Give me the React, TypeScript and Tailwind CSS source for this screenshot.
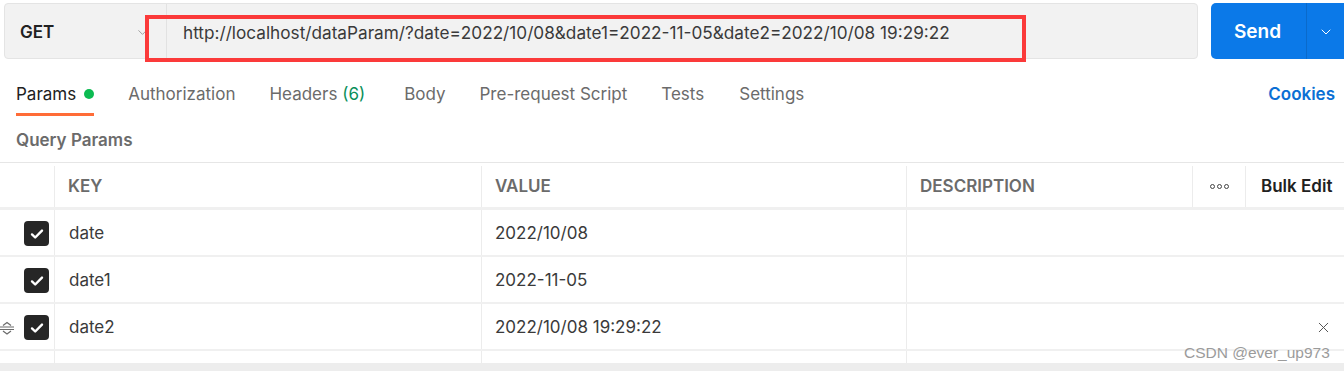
import { ChevronDown, X } from "lucide-react";

type Row = { key: string; value: string; handle?: boolean; remove?: boolean };

const rows: Row[] = [
  { key: "date", value: "2022/10/08" },
  { key: "date1", value: "2022-11-05" },
  { key: "date2", value: "2022/10/08 19:29:22", handle: true, remove: true },
];

function Check() {
  return (
    <span className="flex h-[25px] w-[25px] items-center justify-center rounded-[4px] bg-[#262626]">
      <svg width="16" height="16" viewBox="0 0 16 16" fill="none">
        <path d="M3 8.4l3.2 3.1L13 4.6" stroke="#fff" strokeWidth="2.4" strokeLinecap="round" strokeLinejoin="round" />
      </svg>
    </span>
  );
}

function Handle() {
  return (
    <svg width="14" height="14" viewBox="0 0 14 14" fill="none" className="text-[#6b6b6b]">
      <path d="M3 4.5L7 1.5L11 4.5" stroke="currentColor" strokeWidth="1.2" />
      <path d="M0 6h14M0 8.5h14" stroke="currentColor" strokeWidth="1.2" />
      <path d="M3 10L7 13L11 10" stroke="currentColor" strokeWidth="1.2" />
    </svg>
  );
}

export default function App() {
  return (
    <div className="relative h-[371px] w-[1344px] overflow-hidden bg-white font-['Inter',sans-serif] text-[17px] text-[#212121]">
      {/* request bar */}
      <div className="flex h-[59px] items-end pl-[4px]">
        <div className="flex h-[56px] w-[1194px] shrink-0 rounded-[4px] border border-[#e4e4e4] bg-[#f2f2f2]">
          <div className="flex w-[162px] items-center justify-between border-r border-[#e2e2e2] pl-[15px] pr-[16px] pt-[3px]">
            <span className="text-[17px] font-semibold text-[#212121]">GET</span>
            <ChevronDown size={15} strokeWidth={1.5} className="text-[#9a9a9a]" />
          </div>
          <div className="flex items-center pl-[16px] pt-[3px] text-[17.2px] text-[#3a3a3a]">
            http://localhost/dataParam/?date=2022/10/08&amp;date1=2022-11-05&amp;date2=2022/10/08 19:29:22
          </div>
        </div>
        <div className="ml-[13px] flex h-[56px] w-[140px] shrink-0 rounded-l-[5px] bg-[#0b79e8] text-white">
          <div className="flex w-[96px] items-center justify-center border-r border-[#0a6acb] pr-[2px] pt-[2px] text-[19px] font-semibold">
            Send
          </div>
          <div className="flex w-[36px] items-center justify-center pl-[2px] pt-[2px]">
            <ChevronDown size={16} strokeWidth={1.5} />
          </div>
        </div>
      </div>

      {/* tabs */}
      <div className="flex h-[57px] items-end justify-between pl-[16px] pr-[9px]">
        <div className="flex items-end text-[17px] text-[#6b6b6b]">
          <div className="flex h-[32px] flex-col justify-between">
            <div className="flex items-center gap-[8px] leading-[20px] text-[#212121]">
              Params
              <span className="h-[10px] w-[10px] rounded-full bg-[#0cbb52]" />
            </div>
            <div className="h-[3px] w-[78px] bg-[#ff6c37]" />
          </div>
          <div className="ml-[34px] h-[32px] leading-[20px]">Authorization</div>
          <div className="ml-[34px] h-[32px] leading-[20px]">
            Headers <span className="text-[#0a8f5a]">(6)</span>
          </div>
          <div className="ml-[39px] h-[32px] leading-[20px]">Body</div>
          <div className="ml-[34px] h-[32px] leading-[20px]">Pre-request Script</div>
          <div className="ml-[34px] h-[32px] leading-[20px]">Tests</div>
          <div className="ml-[35px] h-[32px] leading-[20px]">Settings</div>
        </div>
        <div className="h-[32px] text-[17px] font-semibold leading-[20px] text-[#0b6fd4]">Cookies</div>
      </div>

      {/* query params label */}
      <div className="flex h-[46px] items-center pl-[16px] pt-[4px] text-[17px] font-semibold text-[#6b6b6b]">
        Query Params
      </div>

      {/* table */}
      <div className="border-t border-[#e6e6e6]">
        <div className="flex h-[47px] border-b-[3px] border-[#f0f0f0] pt-[3px] text-[17px] font-semibold text-[#6b6b6b]">
          <div className="w-[55px] border-r border-[#ececec]" />
          <div className="flex w-[427px] items-center border-r border-[#ececec] pl-[13px]">KEY</div>
          <div className="flex w-[425px] items-center border-r border-[#ececec] pl-[13px]">VALUE</div>
          <div className="flex w-[286px] items-center border-r border-[#ececec] pl-[13px]">DESCRIPTION</div>
          <div className="flex w-[53px] items-center justify-center border-r border-[#ececec]">
            <span className="flex gap-[2px]">
              <span className="h-[5px] w-[5px] rounded-full border-[1.5px] border-[#444]" />
              <span className="h-[5px] w-[5px] rounded-full border-[1.5px] border-[#444]" />
              <span className="h-[5px] w-[5px] rounded-full border-[1.5px] border-[#444]" />
            </span>
          </div>
          <div className="flex flex-1 items-center pl-[15px] text-[#212121]">Bulk Edit</div>
        </div>
        {rows.map((r) => (
          <div key={r.key} className="flex h-[47px] border-b-2 border-[#f0f0f0] text-[17px] text-[#3a3a3a]">
            <div className="flex w-[55px] items-center border-r border-[#ececec] pt-[2px]">
              <div className="flex w-[24px] justify-start">{r.handle && <Handle />}</div>
              <Check />
            </div>
            <div className="flex w-[427px] items-center border-r border-[#ececec] pl-[14px] pt-[2px]">{r.key}</div>
            <div className="flex w-[425px] items-center border-r border-[#ececec] pl-[13px] pt-[2px]">{r.value}</div>
            <div className="flex flex-1 items-center justify-end pr-[12px] pt-[2px]">
              {r.remove && <X size={17} strokeWidth={1.4} className="text-[#555]" />}
            </div>
          </div>
        ))}
        <div className="flex h-[12px]">
          <div className="w-[55px] border-r border-[#ececec]" />
          <div className="w-[427px] border-r border-[#ececec]" />
          <div className="w-[425px] border-r border-[#ececec]" />
        </div>
        <div className="h-[10px] bg-[#ededed]" />
      </div>

      {/* annotation box */}
      <div className="pointer-events-none absolute left-[145px] top-[15px] h-[47px] w-[881px] border-[4px] border-[#fb3a3a]" />

      {/* watermark */}
      <div className="pointer-events-none absolute left-[1184px] top-[343px] font-['Liberation_Sans',sans-serif] text-[15.5px] leading-[20px] text-[#9b9b9b]">
        CSDN @ever_up973
      </div>
    </div>
  );
}
